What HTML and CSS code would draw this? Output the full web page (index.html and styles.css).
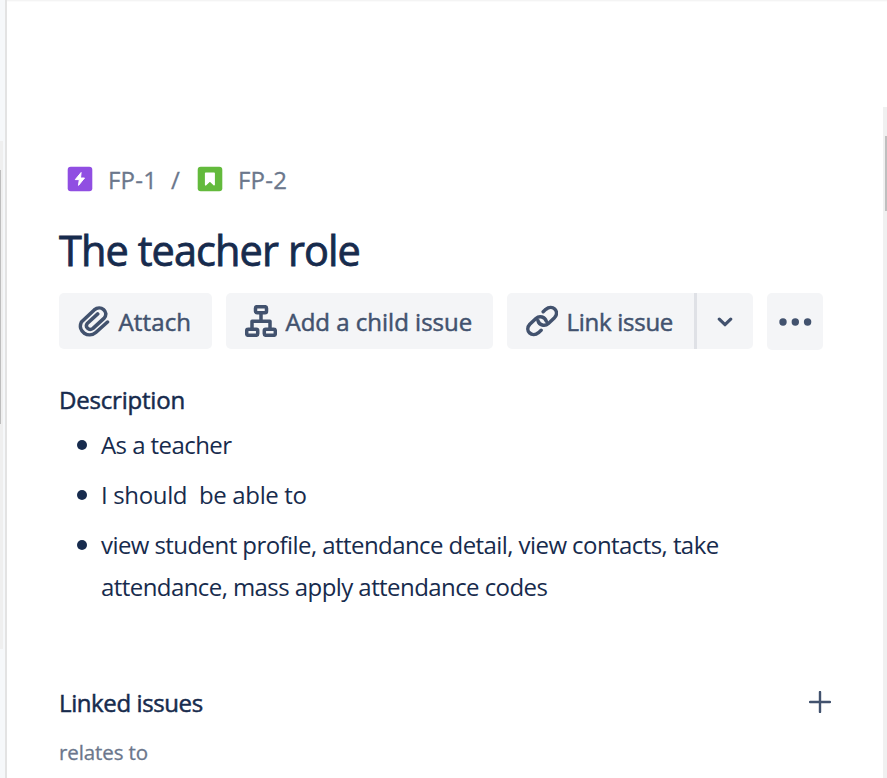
FILE: index.html
```html
<!DOCTYPE html>
<html lang="en">
<head>
<meta charset="utf-8">
<title>The teacher role</title>
<link rel="stylesheet" href="styles.css">
</head>
<body>
<div class="app">
  <aside class="sidebar"><div class="rail"><div class="rail-thumb"></div></div></aside>
  <div class="divider"></div>
  <main class="issue">
    <nav class="crumbs">
      <svg class="type" viewBox="0 0 26 26"><rect x=".7" y=".7" width="24.6" height="24.6" rx="3" fill="#904ee2"/><path d="M14.1 6.5 8.3 13.6h4l-.8 5.8 6-7.4h-4z" fill="#fff" stroke="#fff" stroke-linejoin="round"/></svg>
      <span class="key">FP-1</span><span class="slash">/</span>
      <svg class="type" viewBox="0 0 26 26"><rect x=".7" y=".7" width="24.6" height="24.6" rx="3" fill="#63ba3c"/><path d="M8.7 7.2h8.4v11.6l-4.2-4.1-4.2 4.1z" fill="#fff" stroke="#fff" stroke-width="1.6" stroke-linejoin="round"/></svg>
      <span class="key">FP-2</span>
    </nav>
    <h1 class="title">The teacher role</h1>
    <div class="toolbar">
      <button class="btn attach"><svg class="icon" viewBox="0 0 32 32"><path d="M29.3 16.8 17.6 27.3C10.5 33.5-1.3 26.5 3.2 16.8L16 4.7C22.5-.8 31.3 6.7 26 12.9L14.8 23.2C10.7 26.2 6.3 21.7 9.3 18L19.5 8.7" transform="translate(.2 .2)"/></svg><span>Attach</span></button>
      <button class="btn child"><svg class="icon" viewBox="0 0 32 32"><rect x="10.5" y="1.7" width="11" height="6" rx="1.5"/><rect x="1.7" y="24.3" width="11" height="6" rx="1.5"/><rect x="19.3" y="24.3" width="11" height="6" rx="1.5"/><path d="M16 8v8M7 24v-7.8h18V24"/></svg><span>Add a child issue</span></button>
      <div class="split">
        <button class="btn link"><svg class="icon" viewBox="0 0 32 32"><path d="m17.2 6.7 2.6-2.4c6.5-5.4 14.4 2 8.7 8.4l-6.1 5.8c-3.7 3.3-9.1 1.6-10.3-2.6M15.1 25.3l-2.6 2.4C6 33-2 25.7 3.8 19.3l6.1-5.8c3.7-3.3 9.1-1.6 10.3 2.6"/></svg><span>Link issue</span></button>
        <button class="btn caret" aria-label="Link options"><svg class="chevron" viewBox="0 0 16 10"><path d="m2.3 2.2 5.7 5.5 5.7-5.5"/></svg></button>
      </div>
      <button class="btn more" aria-label="More"><svg class="dots" viewBox="0 0 34 8"><circle cx="5" cy="4" r="3.7"/><circle cx="17.3" cy="4" r="3.7"/><circle cx="29.6" cy="4" r="3.7"/></svg></button>
    </div>
    <h2 class="heading desc-title">Description</h2>
    <ul class="list">
      <li>As a teacher</li>
      <li class="loose">I should&nbsp; be able to</li>
      <li>view student profile, attendance detail, view contacts, take<br>attendance, mass apply attendance codes</li>
    </ul>
    <div class="linked">
      <h2 class="heading linked-title">Linked issues</h2>
      <svg class="plus" viewBox="0 0 22 22"><path d="M11 1v20M1 11h20"/></svg>
    </div>
    <p class="relation">relates to</p>
  </main>
  <div class="scroll"><div class="thumb"></div></div>
</div>
</body>
</html>
```
FILE: styles.css
```css
* { box-sizing: border-box; }
body { margin: 0; background: #fff; font-family: "Open Sans", "Noto Sans", sans-serif; color: #172b4d; }
.app { display: flex; width: 887px; height: 778px; overflow: hidden; box-shadow: inset 0 2px 2px -1px #f0f0f0; }
.sidebar { width: 5px; background: #f6f8fa; padding-top: 141px; flex: none; }
.rail { width: 3px; height: 508px; padding-top: 29px; background: #efefef; }
.rail-thumb { width: 1px; height: 254px; background: #bdbdbd; }
.divider { width: 2px; background: #e3e3e3; flex: none; }
.issue { flex: 1; padding: 160px 0 0 52px; }
.crumbs { display: flex; align-items: center; height: 38px; padding-left: 8px; font-size: 24px; color: #6b778c; -webkit-text-stroke: 0.3px; }
.type { width: 26px; height: 26px; flex: none; }
.key { width: 63px; margin-left: 15px; letter-spacing: 0.2px; }
.slash { width: 26px; }
.title { margin: 22px 0 0; height: 60px; line-height: 60px; font-size: 41.5px; font-weight: 400; letter-spacing: -0.92px; white-space: nowrap; -webkit-text-stroke: 0.8px; }
.toolbar { display: flex; align-items: flex-start; gap: 14px; margin-top: 13px; height: 57px; }
.btn { display: flex; align-items: center; height: 56px; border: 0; border-radius: 5px; background: #f4f5f7; color: #42526e; font: 400 24px "Open Sans", "Noto Sans", sans-serif; padding: 0 0 0 18.5px; white-space: nowrap; -webkit-text-stroke: 0.5px; }
.icon { width: 32px; height: 32px; margin-right: 9px; flex: none; fill: none; stroke: currentColor; stroke-width: 3.5; stroke-linecap: round; stroke-linejoin: round; }
.attach { width: 153px; letter-spacing: 0.15px; }
.child { width: 267px; }
.split { display: flex; }
.link { width: 187px; border-radius: 5px 0 0 5px; letter-spacing: -0.27px; }
.caret { width: 59px; border-left: 3px solid #dfe1e6; border-radius: 0 5px 5px 0; padding: 2px 0 0; justify-content: center; }
.chevron { width: 16px; height: 10px; fill: none; stroke: currentColor; stroke-width: 3.2; stroke-linecap: round; stroke-linejoin: round; }
.more { width: 56px; height: 57px; padding: 0; justify-content: center; }
.dots { width: 34px; height: 8px; fill: currentColor; }
.heading { margin: 0; font-size: 24px; line-height: 36px; font-weight: 400; white-space: nowrap; -webkit-text-stroke: 0.5px; letter-spacing: -0.2px; }
.desc-title { margin-top: 32px; }
.linked-title { letter-spacing: -0.4px; }
.list { margin: 6px 0 0; padding: 0 0 0 42px; font-size: 24px; line-height: 42px; font-weight: 400; letter-spacing: -0.57px; list-style: none; white-space: nowrap; }
.list li { margin-bottom: 8px; }
.list .loose { letter-spacing: -0.35px; }
.list li::before { content: ""; float: left; width: 10px; height: 10px; margin: 16px 0 0 -24px; border-radius: 50%; background: #172b4d; }
.linked { display: flex; align-items: center; justify-content: space-between; margin-top: 77px; padding-right: 52px; }
.linked .plus { width: 22px; height: 22px; margin-top: -2px; fill: none; stroke: #42526e; stroke-width: 2.4; stroke-linecap: round; }
.relation { margin: 15px 0 0; font-size: 20.5px; line-height: 32px; color: #6b778c; letter-spacing: -0.1px; -webkit-text-stroke: 0.3px; }
.scroll { width: 4px; height: 671px; margin-top: 107px; padding: 29px 0 0 2px; background: #f0f0f0; flex: none; }
.thumb { width: 2px; height: 75px; background: #bfbfbf; }
```
